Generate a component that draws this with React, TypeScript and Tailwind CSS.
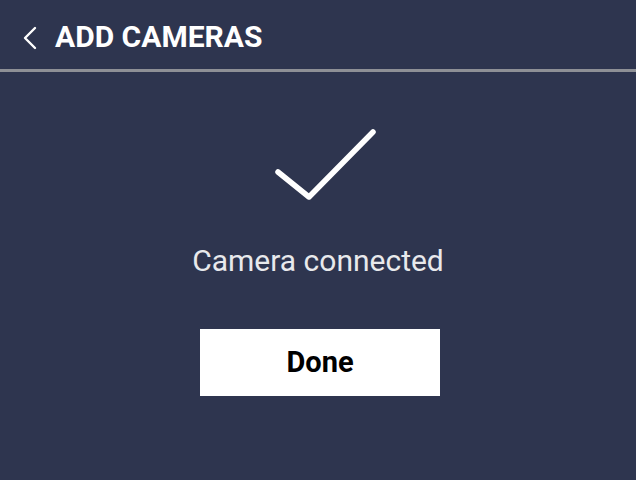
export default function App() {
  return (
    <div className="w-[636px] h-[480px] bg-[#2e354f] flex flex-col" style={{ fontFamily: "Roboto, 'Liberation Sans', sans-serif" }}>
      <div className="h-[72px] flex items-start pt-[22px] pl-[23px] border-b-[3px] border-[#8e9096]">
        <svg width="14" height="24" viewBox="0 0 14 24" className="mt-[4px]">
          <path d="M12 2 L2 12 L12 22" stroke="white" strokeWidth="2.4" fill="none" strokeLinecap="round" strokeLinejoin="round" />
        </svg>
        <span className="ml-[18px] text-white font-bold text-[30px] leading-none">ADD CAMERAS</span>
      </div>
      <div className="flex flex-col items-center">
        <svg width="120" height="90" viewBox="0 0 120 90" className="mt-[48px] ml-[16px]">
          <path d="M12 52 L43 77 L107 12" stroke="white" strokeWidth="5.5" fill="none" strokeLinecap="round" strokeLinejoin="round" />
        </svg>
        <div className="mt-[36px] text-[#e8e9ec] text-[30px] leading-none">Camera connected</div>
        <button className="mt-[53px] ml-[4px] w-[240px] h-[67px] bg-white text-black font-bold text-[29px] leading-none flex items-center justify-center">Done</button>
      </div>
    </div>
  );
}
